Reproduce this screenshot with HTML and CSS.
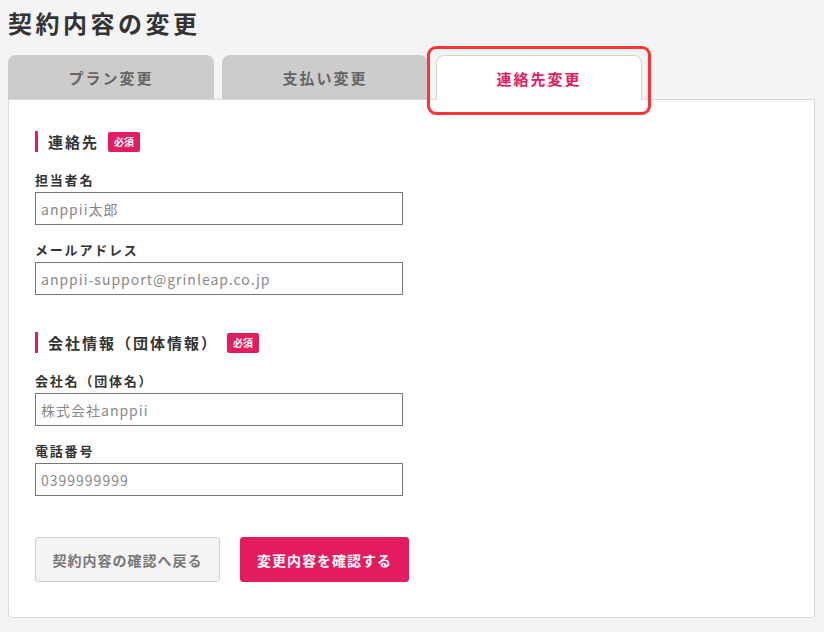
FILE: index.html
```html
<!DOCTYPE html>
<html lang="ja">
<head>
<meta charset="utf-8">
<title>契約内容の変更</title>
<link rel="stylesheet" href="styles.css">
</head>
<body>
<h1 class="title">契約内容の変更</h1>
<div class="tabs">
  <div class="tab">プラン変更</div>
  <div class="tab">支払い変更</div>
  <div class="tab tab-active">連絡先変更<span class="highlight"></span></div>
</div>
<div class="panel">
  <div class="section-head"><span class="section-title">連絡先</span><span class="badge">必須</span></div>
  <div class="field field-first">
    <div class="label">担当者名</div>
    <input class="input" type="text" placeholder="anppii太郎">
  </div>
  <div class="field">
    <div class="label">メールアドレス</div>
    <input class="input" type="text" placeholder="anppii-support@grinleap.co.jp">
  </div>
  <div class="section-head section-second"><span class="section-title">会社情報（団体情報）</span><span class="badge">必須</span></div>
  <div class="field field-first">
    <div class="label">会社名（団体名）</div>
    <input class="input" type="text" placeholder="株式会社anppii">
  </div>
  <div class="field">
    <div class="label">電話番号</div>
    <input class="input" type="text" placeholder="0399999999">
  </div>
  <div class="buttons">
    <button class="btn btn-back">契約内容の確認へ戻る</button>
    <button class="btn btn-primary">変更内容を確認する</button>
  </div>
</div>
</body>
</html>
```
FILE: styles.css
```css
* { box-sizing: border-box; }
html, body { margin: 0; }
body {
  background: #f4f4f4;
  padding: 8px 9px 0 8px;
  font-family: "Noto Sans CJK JP", "Noto Sans", sans-serif;
  color: #333;
}
.title {
  margin: 0;
  font-size: 24px;
  line-height: 30px;
  font-weight: 700;
  letter-spacing: 3.5px;
  color: #333;
}
.tabs {
  display: flex;
  gap: 8px;
  margin-top: 17px;
}
.tab {
  position: relative;
  width: 206px;
  height: 44px;
  background: #cccccc;
  border-radius: 8px 8px 0 0;
  display: flex;
  align-items: center;
  justify-content: center;
  font-size: 15px;
  font-weight: 700;
  letter-spacing: 2px;
  color: #666;
}
.tab-active {
  background: #fff;
  border: 1px solid #d4d4d4;
  border-bottom: none;
  color: #e31c5f;
  margin-bottom: -1px;
  height: 45px;
  z-index: 1;
}
.highlight {
  position: absolute;
  left: -10px;
  right: -10px;
  top: -10px;
  bottom: -15px;
  border: 3px solid #ff3333;
  border-radius: 9px;
}
.panel {
  background: #fff;
  border: 1px solid #d8d8d8;
  border-radius: 0 0 4px 4px;
  padding: 31px 26px 35px 26px;
}
.section-head {
  display: flex;
  align-items: center;
  height: 21px;
}
.section-title {
  border-left: 3px solid #e31c5f;
  padding-left: 10px;
  height: 21px;
  line-height: 21px;
  font-size: 15px;
  font-weight: 700;
  letter-spacing: 2px;
  color: #333;
}
.badge {
  margin-left: 9px;
  background: #e31c5f;
  color: #fff;
  font-size: 10px;
  font-weight: 700;
  height: 20px;
  line-height: 20px;
  padding: 0 6px;
  border-radius: 2px;
}
.section-second { margin-top: 37px; }
.field { margin-top: 15px; }
.field-first { margin-top: 18px; }
.label {
  font-size: 13px;
  font-weight: 700;
  line-height: 20px;
  letter-spacing: 1.8px;
  margin-bottom: 2px;
  color: #333;
}
.input {
  display: block;
  width: 368px;
  height: 33px;
  border: 1px solid #777;
  border-radius: 0;
  padding: 0 5px;
  font-family: "Noto Sans CJK JP", "Noto Sans", sans-serif;
  font-size: 14px;
  letter-spacing: 1px;
  color: #333;
  background: #fff;
}
.input::placeholder { color: #888; }
.buttons {
  display: flex;
  gap: 20px;
  margin-top: 41px;
}
.btn {
  height: 45px;
  border-radius: 3px;
  font-family: "Noto Sans CJK JP", "Noto Sans", sans-serif;
  font-size: 14px;
  font-weight: 700;
  letter-spacing: 1px;
  padding: 0;
}
.btn-back {
  width: 185px;
  background: #f4f4f4;
  border: 1px solid #cfcfcf;
  color: #777;
}
.btn-primary {
  width: 169px;
  background: #e31c5f;
  border: 1px solid #e31c5f;
  color: #fff;
}
```
